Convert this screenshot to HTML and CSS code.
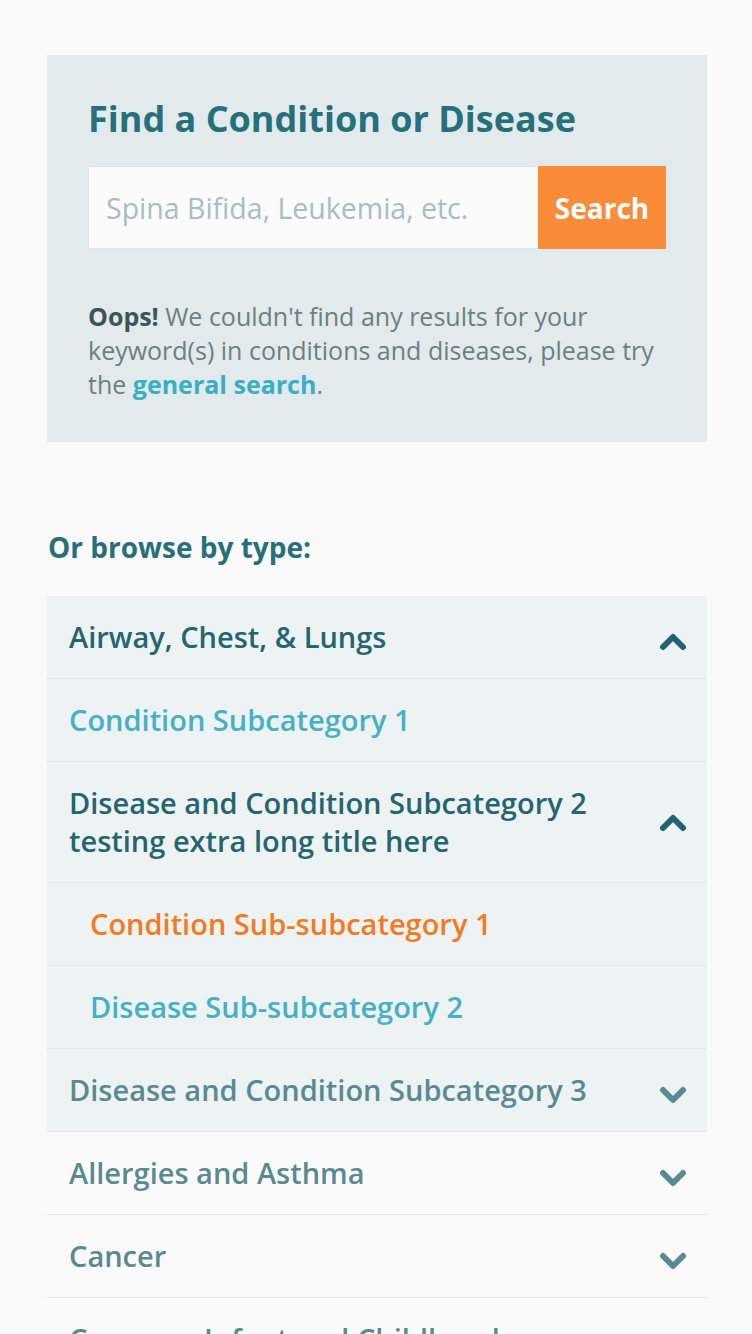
FILE: index.html
```html
<!DOCTYPE html>
<html lang="en">
<head>
<meta charset="utf-8">
<title>Find a Condition or Disease</title>
<link rel="stylesheet" href="styles.css">
</head>
<body>
<main class="page">
  <section class="finder">
    <h1 class="finder-title">Find a Condition or Disease</h1>
    <form class="search">
      <input class="search-input" type="text" placeholder="Spina Bifida, Leukemia, etc.">
      <button class="search-btn" type="button">Search</button>
    </form>
    <p class="notice"><strong>Oops!</strong> We couldn't find any results for your keyword(s) in conditions and diseases, please try the <a href="#" class="notice-link">general search</a>.</p>
  </section>

  <h2 class="browse-title">Or browse by type:</h2>

  <ul class="types">
    <li class="row row-open row-head">
      <span class="row-text">Airway, Chest, &amp; Lungs</span>
      <svg class="chev chev-dark" viewBox="0 0 28 18"><polyline points="4,14 14,4 24,14"/></svg>
    </li>
    <li class="row row-open row-link">
      <span class="row-text">Condition Subcategory 1</span>
    </li>
    <li class="row row-open row-head row-tall">
      <span class="row-text row-text-narrow">Disease and Condition Subcategory 2 testing extra long title here</span>
      <svg class="chev chev-dark" viewBox="0 0 28 18"><polyline points="4,14 14,4 24,14"/></svg>
    </li>
    <li class="row row-open row-sub row-active">
      <span class="row-text">Condition Sub-subcategory 1</span>
    </li>
    <li class="row row-open row-sub row-link">
      <span class="row-text">Disease Sub-subcategory 2</span>
    </li>
    <li class="row row-open row-closed">
      <span class="row-text">Disease and Condition Subcategory 3</span>
      <svg class="chev chev-light" viewBox="0 0 28 18"><polyline points="4,4 14,14 24,4"/></svg>
    </li>
    <li class="row row-closed">
      <span class="row-text">Allergies and Asthma</span>
      <svg class="chev chev-light" viewBox="0 0 28 18"><polyline points="4,4 14,14 24,4"/></svg>
    </li>
    <li class="row row-closed">
      <span class="row-text">Cancer</span>
      <svg class="chev chev-light" viewBox="0 0 28 18"><polyline points="4,4 14,14 24,4"/></svg>
    </li>
    <li class="row row-closed">
      <span class="row-text">Common Infant and Childhood Conditions</span>
      <svg class="chev chev-light" viewBox="0 0 28 18"><polyline points="4,4 14,14 24,4"/></svg>
    </li>
  </ul>
</main>
</body>
</html>
```

FILE: styles.css
```css
* { box-sizing: border-box; }

html, body {
  margin: 0;
  padding: 0;
  background: #fafafa;
}

body {
  font-family: "Open Sans", Lato, "Liberation Sans", sans-serif;
  color: #2a6a75;
}

.page {
  padding: 55px 45px 0 47px;
}

.finder {
  background: #e2eaeb;
  padding: 44px 41px 41px 41px;
}

.finder-title {
  margin: 0;
  font-size: 36px;
  line-height: 40px;
  font-weight: 700;
  color: #26707b;
}

.search {
  margin: 27px 0 0 0;
  display: flex;
  height: 83px;
}

.search-input {
  flex: 1;
  min-width: 0;
  border: 1px solid #dfe6e7;
  border-right: none;
  background: #fbfbfb;
  padding: 0 17px;
  font-family: inherit;
  font-size: 28.5px;
  color: #333;
  outline: none;
}

.search-input::placeholder {
  color: #a9bdc0;
}

.search-btn {
  width: 128px;
  border: none;
  background: #f98b39;
  color: #ffffff;
  font-family: inherit;
  font-size: 28px;
  font-weight: 700;
  padding: 0;
}

.notice {
  margin: 50px 0 0 0;
  font-size: 25px;
  line-height: 34px;
  color: #6d7f82;
}

.notice strong {
  color: #3e5457;
  font-weight: 700;
}

.notice-link {
  color: #3aafc4;
  font-weight: 700;
  text-decoration: none;
}

.browse-title {
  margin: 87px 0 31px 1px;
  font-size: 28px;
  line-height: 36px;
  font-weight: 700;
  color: #27707b;
}

.types {
  list-style: none;
  margin: 0;
  padding: 0;
}

.row {
  display: flex;
  align-items: center;
  justify-content: space-between;
  gap: 20px;
  padding: 22px 20px 22px 22px;
  border-bottom: 1px solid #e0e8ea;
  font-size: 29px;
  line-height: 38px;
  font-weight: 600;
}

.row-open {
  background: #edf2f3;
}

.row-head .row-text {
  color: #24656f;
}

.row-text-narrow {
  max-width: 560px;
}

.row-link .row-text {
  color: #45b0c6;
}

.row-active .row-text {
  color: #f37a1f;
}

.row-sub {
  padding-left: 43px;
}

.row-closed .row-text {
  color: #5a8a91;
}

.chev {
  flex: none;
  width: 28px;
  height: 18px;
  margin-top: 10px;
  fill: none;
  stroke-width: 6;
  stroke-linecap: round;
  stroke-linejoin: round;
}

.chev-dark { stroke: #1f6470; }
.chev-light { stroke: #5a8a91; }
.row-tall .chev { margin-top: 2px; }
```
